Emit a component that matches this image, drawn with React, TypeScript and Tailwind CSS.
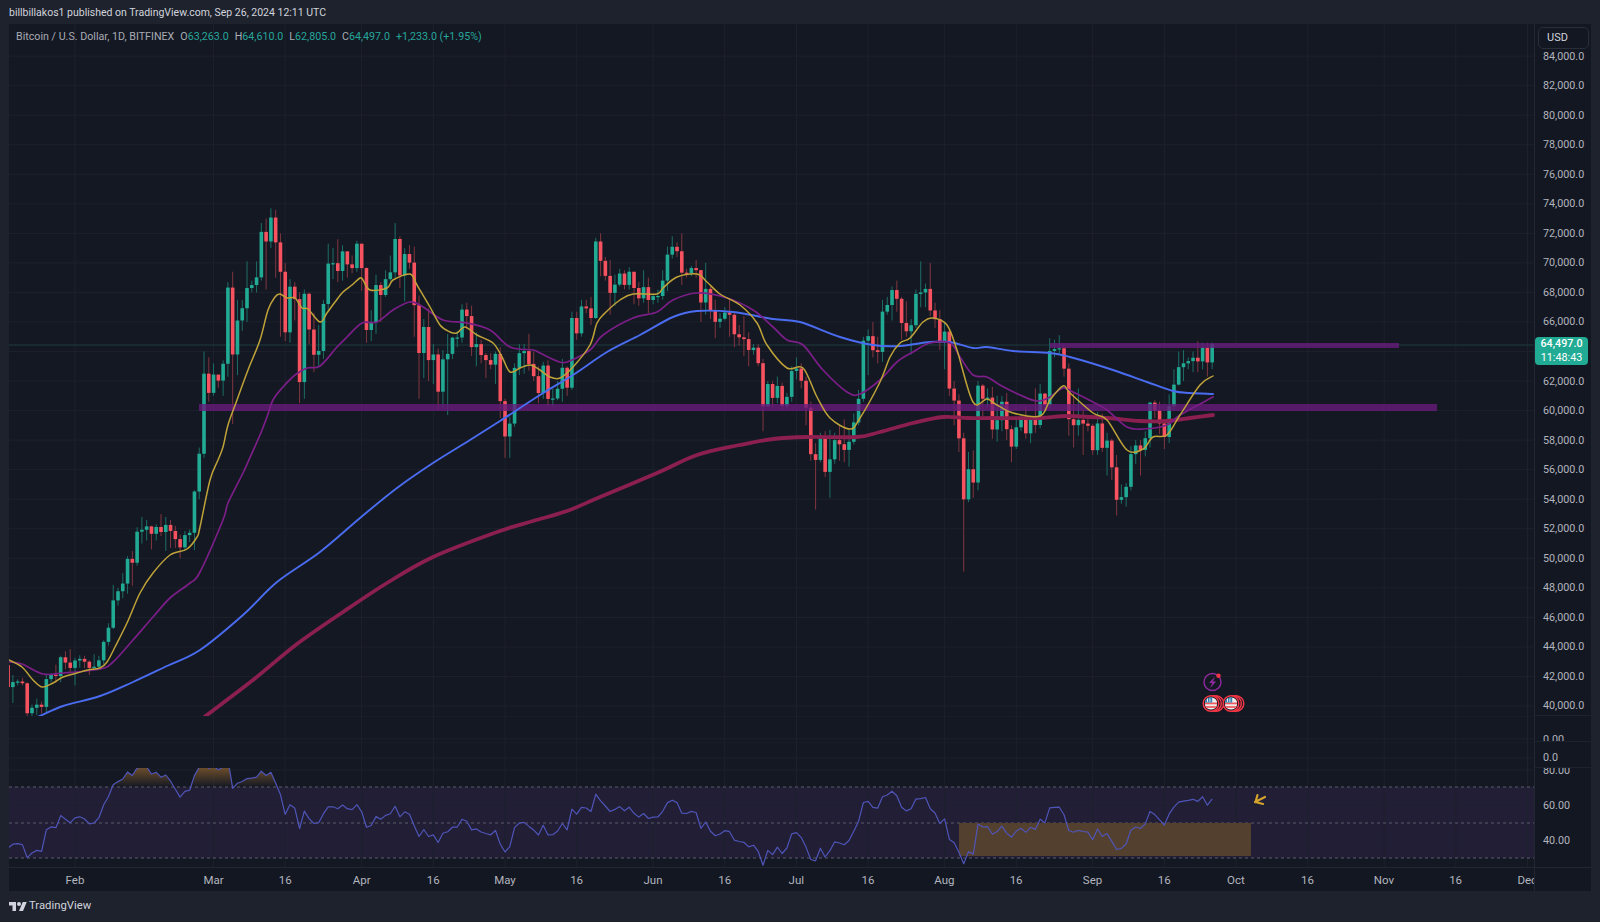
import React from "react";

// close, high, low in hundreds of USD, one row per day from Jan 18. Open is the previous close.
const bars: number[][] = [
  [412.8,430,408],[416.2,421,402],[416.6,418,414],[415.4,419,414],[395.1,416,392],[398.8,401,388],[400.9,405,394],[399.4,403,395],[418.2,422,395],[421.2,422,416],[420.3,428,416],[433,434,416],[429.4,437,425],[425.8,438.6,422],
  [430.8,432.6,414],[431.9,434.3,426],[430,434,425.6],[425.8,431,421],[426.6,435,424],[430.9,434,425],[443.4,444.5,428],[453,456,441],[471.5,482,452],[477.7,480,468],[482.9,490,473],[499.6,501.5,476],[497,505,481.5],[518,521,495],[519.3,528,510],[521.6,526,512],[516.6,522,506],[521.2,523,512],[517.8,530,515],[522.6,528,505],[518.5,526,507],[513,522,507],[507.4,516,500],[515.7,518.5,505],[517.3,519.5,511],[545.2,546,505.5],[570.8,575,540],[625,640,568],[612,636,606],
  [624.4,632,610],[620.3,624,615.5],[631.7,634,610],[683.3,687,623],[638,694,591],[661,675,624],[669.3,675,654],[683,701,660],[685,688,680],[690.2,701,680],[721,727,688],[714.5,730,682],[730.7,737,710],[713.9,736,690],[694,720,650],[653,700,647],[683.9,689,646],[675.5,687,661],[619.3,680,605],[679.1,682,608],[654.9,680,645],[637.8,666,626],[640.4,658,630],[672.2,675,635],[699.5,713,667],[699.8,710,689],[694.5,716,687],[707.8,712,688],[699,708,690],[696.5,705,693],[713,715,694],
  [696.5,713,681],[654.6,697,646],[659.7,668,647],[685,692,652],[678.3,687,660],[689,695,677],[693.6,705,688],[716.2,727,690],[691.5,718,683],[706,710,674],[700.2,712,696],[671.4,711,650],[639,678,608],[656.6,662,622],[634.2,669,620],[638,645,618],[612.8,642,600],[634.7,641,602],[638.4,652,597],[649.4,650,635],[649.5,654,643],[668.4,672,646],[664,673,655],[643,671,637],[645,653,630],[637.6,648,632],[634.2,639,622],[631.1,639,628],[638.4,640,618],[606.4,643,595],
  [582.5,608,568],[591.2,596,568],[628.9,632,589],[638.9,645,624],[640.3,645,625],[631.6,652,627],[623.3,640,620],[611.9,630,605],[630.5,633,608],[607.9,634,603],[608.2,615,603],[614.8,620,607],[629,635,606],[615.5,630,610],[662.7,667,614],[652.3,667,648],[670.5,675,650],[669.2,675,666],[662.7,677,658],[714.5,717,662],[701.4,720,691],[691.2,704,688],[679.7,702,665],[685.3,692,671],[692.8,696,684],[685.1,695,682],[694,697,682],[683,694,672],[676,687,671],[683.6,695,673],[674.9,690,666],
  [677.5,679,672],[677.6,682,673],[688,695,675],[705.6,711,681],[710.9,718,703],[707.9,714,704],[693.4,720,685],[693.1,696,690],[696.5,698,691],[695.1,702,690],[673.2,695,660],[682.4,700,665],[667.6,684,662],[660.1,675,649],[662.2,666,656],[666.4,670,661],[664.9,675,650],[651.7,666,643],[649.6,658,644],[648.4,664,637],[641,653,630],[642.6,645,638],[632.1,645,630],[602.8,635,586],[618,620,603],[608.6,620,602],[616.7,623,605],[603.2,619,600],[609.3,612,601],[626.8,630,606],
  [628.5,636,621],[620.2,632,615],[602,623,590],[570.5,606,566],[566.6,578,533],[582.3,585,565],[558.5,586,555],[567,587,541],[580,585,564],[577.2,590,566],[573.4,594,565],[578.9,587,562],[592,598,577],[608,614,590],[647.3,650,606],[650.4,655,624],[640.9,660,636],[639.7,650,632],[667,675,633],[671.5,677,665],[681.6,684,661],[675.7,688,667],[659.3,677,648],[653.7,674,650],[657.8,662,638],[679,682,656],[680,701,670],[682.4,686,670],[667.8,700,664],[661.9,673,656],[646.2,668,641],
  [653.5,660,628],[614.9,655,610],[606.8,620,590],[581.2,611,572],[539.9,585,491],[560.3,572,538],[551.3,573,541],[616.9,620,546],[608,618,596],[608.8,615,602],[587.2,616,581],[593.5,610,579],[606,610,586],[587.4,612,580],[575.6,590,565],[588.7,595,574],[594.8,597,586],[584.6,603,581],[594.9,596,578],[590.2,615,585],[611.5,618,588],[603.8,612,600],[640.4,649,601],[641.7,648,636],[642.2,651,638],[628.4,644,623],[594.2,632,583],[590.1,613,575],[593.7,615,583],[591.2,600,570],[589.7,595,586],
  [573.2,591,570],[591.3,599,570],[574.8,598,572],[579.7,585,556],[561.6,581,553],[539.6,570,529],[541.4,550,537],[548.4,551,535],[570.5,576,546],[576.4,580,564],[573.4,580,556],[581.3,586,569],[605.4,606,575],[600,607,595],[591.3,606,584],[582.1,592,574],[603,611,578],[617.6,628,600],[629.4,640,617],[632,641,620],[633.5,636,628],[635.8,640,626],[633.3,647,626],[642.6,646,628],[632.63,646,623],[644.97,646.1,628.05],
];

const yellow = "9,660 22,667 33,680 42,687 53,683 63,677 77,673 88,670 100,668 107,662 115,647 127,623 140,593 153,573 170,555 187,549 197,537 200,527 210,480 218,460 223,447 228,425 237,400 248,370 260,340 268,310 275,297 280,294 287,298 295,298 302,308 308,309 320,322 327,313 335,302 343,292 352,285 360,278 363,280 370,290 387,288 393,280 410,274 417,285 430,307 440,325 450,332 457,333 465,327 477,335 493,343 502,357 510,372 520,368 530,365 540,370 550,377 560,378 573,367 590,345 597,323 605,313 620,300 633,294 657,294 663,288 677,277 697,274 707,282 720,294 740,305 757,323 767,345 787,368 803,368 817,397 830,418 850,429 860,418 880,382 890,357 900,343 910,338 923,322 933,318 947,325 957,350 973,402 987,399 997,405 1013,413 1040,416 1050,400 1063,386 1070,393 1093,413 1107,420 1127,450 1143,449 1153,437 1167,435 1180,415 1200,385 1213,376";
const purple = "9,662 22,664 43,674 63,673 100,669 113,662 133,640 153,617 170,598 190,583 200,572 223,520 228,503 243,473 248,462 260,435 267,417 273,400 283,387 295,375 307,368 320,366 337,347 347,337 362,323 377,322 393,310 410,302 423,307 443,320 467,323 490,330 510,347 533,350 540,353 557,361 567,362 590,350 603,335 633,318 657,312 673,300 697,293 727,298 753,310 773,327 787,340 803,345 823,370 847,392 860,394 880,380 897,362 913,352 930,343 950,343 960,357 973,375 987,377 1000,385 1020,395 1037,401 1050,397 1063,388 1073,392 1093,402 1107,410 1127,427 1143,429 1167,425 1180,415 1213,397";
const blue = "30,720 40,716 63,706 100,696 133,682 167,666 200,650 243,615 277,582 320,552 360,518 397,488 433,463 470,440 500,421 540,395 573,375 607,352 640,335 673,317 697,311 733,312 773,319 800,322 840,337 873,345 900,346 930,342 950,342 973,348 987,347 1013,351 1050,353 1070,357 1113,370 1147,382 1173,391 1190,393 1213,394";
const maroon = "200,721 207,715 253,680 297,644 343,612 387,583 433,557 497,532 533,521 567,511 600,497 657,473 697,455 740,445 773,439 807,437 857,437 880,432 913,423 943,417 967,418 993,418 1040,418 1067,416 1107,418 1140,421 1167,421 1190,418 1213,415";

const ticks: [string, number][] = [["Feb",0],["Mar",29],["16",44],["Apr",60],["16",75],["May",90],["16",105],["Jun",121],["16",136],["Jul",151],["16",166],["Aug",182],["16",197],["Sep",213],["16",228],["Oct",243],["16",258],["Nov",274],["16",289],["Dec",304]];
const priceLabels = [84,82,80,78,76,74,72,70,68,66,64,62,60,58,56,54,52,50,48,46,44,42,40];

const xAt = (d: number) => 75 + 4.778 * d;
const yAt = (hundreds: number) => 706 - ((hundreds - 400) / 20) * 29.54;
const rsiY = (v: number) => 805 + ((60 - v) / 20) * 35.2;

const tickXs = ticks.map(([, d]) => xAt(d));

// catmull-rom through the read-off points, so the averages don't kink
const smooth = (points: string) => {
  const p = points.split(" ").map((s) => s.split(",").map(Number));
  let d = `M${p[0][0]} ${p[0][1]}`;
  for (let i = 0; i < p.length - 1; i++) {
    const a = p[Math.max(i - 1, 0)];
    const b = p[i];
    const c = p[i + 1];
    const e = p[Math.min(i + 2, p.length - 1)];
    const c1x = b[0] + (c[0] - a[0]) / 6;
    const c1y = b[1] + (c[1] - a[1]) / 6;
    const c2x = c[0] - (e[0] - b[0]) / 6;
    const c2y = c[1] - (e[1] - b[1]) / 6;
    d += `C${c1x.toFixed(1)} ${c1y.toFixed(1)} ${c2x.toFixed(1)} ${c2y.toFixed(1)} ${c[0]} ${c[1]}`;
  }
  return d;
};

const rsiLine = (() => {
  let gain = 2.9;
  let loss = 4.1;
  const out: string[] = [];
  bars.forEach((b, i) => {
    const prev = i === 0 ? 427.7 : bars[i - 1][0];
    const ch = b[0] - prev;
    gain = (gain * 13 + Math.max(ch, 0)) / 14;
    loss = (loss * 13 + Math.max(-ch, 0)) / 14;
    const v = 100 - 100 / (1 + gain / loss);
    out.push(`${xAt(i - 14).toFixed(1)},${rsiY(v).toFixed(1)}`);
  });
  return out;
})();

const Grid: React.FC<{ rows: number[]; top: number; bottom: number }> = ({ rows, top, bottom }) => (
  <g stroke="#1d212d" strokeWidth="1">
    {rows.map((y) => <line key={y} x1="9" x2="1534" y1={y} y2={y} />)}
    {tickXs.map((x) => <line key={x} x1={x} x2={x} y1={top} y2={bottom} />)}
  </g>
);

const Candles: React.FC = () => (
  <g>
    {bars.map((b, i) => {
      const [c, h, l] = b;
      const o = i === 0 ? 427.7 : bars[i - 1][0];
      const x = xAt(i - 14);
      const up = c >= o;
      const top = yAt(Math.max(o, c));
      const bottom = yAt(Math.min(o, c));
      return (
        <g key={i}>
          <line x1={x} x2={x} y1={yAt(h)} y2={yAt(l)} stroke={up ? "#1c6e66" : "#80363f"} strokeWidth="1" />
          <rect x={x - 1.8} y={top} width="3.6" height={Math.max(bottom - top, 1.2)} fill={up ? "#22ab94" : "#f7525f"} />
        </g>
      );
    })}
  </g>
);

const UsFlag: React.FC<{ cx: number; cy: number; id: string }> = ({ cx, cy, id }) => (
  <g>
    <circle cx={cx + 5} cy={cy} r="7.8" fill="#141823" stroke="#f23645" strokeWidth="1.5" />
    <circle cx={cx + 2.5} cy={cy} r="7.8" fill="#141823" stroke="#f23645" strokeWidth="1.5" />
    <circle cx={cx} cy={cy} r="7.8" fill="#141823" stroke="#f23645" strokeWidth="1.5" />
    <clipPath id={id}><circle cx={cx} cy={cy} r="6.2" /></clipPath>
    <g clipPath={`url(#${id})`}>
      <rect x={cx - 6.2} y={cy - 6.2} width="12.4" height="12.4" fill="#eeeeee" />
      <rect x={cx - 6.2} y={cy - 1} width="12.4" height="1.8" fill="#f05a5f" />
      <rect x={cx - 6.2} y={cy + 2.6} width="12.4" height="1.8" fill="#f05a5f" />
      <rect x={cx - 6.2} y={cy - 6.2} width="7.4" height="5.2" fill="#2f7fae" />
      <rect x={cx - 4} y={cy - 5} width="1" height="3.4" fill="#e6eef2" />
      <rect x={cx - 1.6} y={cy - 5} width="1" height="3.4" fill="#e6eef2" />
    </g>
  </g>
);

const MainPane: React.FC = () => (
  <svg className="block h-[692px] w-[1525px]" viewBox="9 24 1525 692">
    <Grid rows={priceLabels.map((p) => yAt(p * 10))} top={24} bottom={716} />
    <line x1="9" x2="1534" y1="345" y2="345" stroke="#1c3a3c" strokeWidth="1" />
    <Candles />
    <rect x="1050" y="343" width="349" height="5" fill="#661c7b" fillOpacity="0.8" />
    <rect x="199" y="404" width="1238" height="7" fill="#661c7b" fillOpacity="0.8" />
    <g fill="none" strokeLinejoin="round" strokeLinecap="round">
      <path d={smooth(maroon)} stroke="#8a1f50" strokeWidth="3.8" />
      <path d={smooth(blue)} stroke="#4a6cf0" strokeWidth="1.9" />
      <path d={smooth(purple)} stroke="#7b1e87" strokeWidth="1.7" />
      <path d={smooth(yellow)} stroke="#bfa339" strokeWidth="1.5" />
    </g>
    <circle cx="1212.5" cy="682" r="8.5" fill="none" stroke="#8e2a9e" strokeWidth="1.4" />
    <path d="M1215 676.5l-6 6.5h3.2l-2 5 6-6.5h-3.2z" fill="#8e2a9e" />
    <circle cx="1218.5" cy="675.8" r="2.2" fill="#f23645" />
    <UsFlag cx={1211} cy={703.5} id="flag-a" />
    <UsFlag cx={1231} cy={703.5} id="flag-b" />
  </svg>
);

const RsiPane: React.FC = () => {
  const pts = rsiLine.join(" ");
  const first = rsiLine[0].split(",")[0];
  const last = rsiLine[rsiLine.length - 1].split(",")[0];
  return (
    <svg className="block h-[99px] w-[1525px]" viewBox="9 768 1525 99">
      <defs>
        <linearGradient id="over" gradientUnits="userSpaceOnUse" x1="0" x2="0" y1="768" y2="787">
          <stop offset="0" stopColor="#6b4d2a" />
          <stop offset="1" stopColor="#6b4d2a" stopOpacity="0" />
        </linearGradient>
        <clipPath id="above"><rect x="9" y="768" width="1525" height="19" /></clipPath>
      </defs>
      <rect x="9" y="787" width="1525" height="71" fill="#211e35" />
      <Grid rows={[770, 805, 840]} top={768} bottom={867} />
      <g stroke="#5b5d6a" strokeWidth="1" strokeDasharray="3 3">
        <line x1="9" x2="1534" y1="787" y2="787" />
        <line x1="9" x2="1534" y1="823" y2="823" />
        <line x1="9" x2="1534" y1="858" y2="858" />
      </g>
      <polygon points={`${first},787 ${pts} ${last},787`} fill="url(#over)" clipPath="url(#above)" />
      <rect x="959" y="823" width="292" height="33" fill="#54402f" />
      <polyline points={pts} fill="none" stroke="#4f55b8" strokeWidth="1.2" strokeLinejoin="round" />
      <path d="M1265 797l-10 5M1257.5 795l-2 7 7.5 2" fill="none" stroke="#d4a32d" strokeWidth="2.2" strokeLinecap="round" strokeLinejoin="round" />
    </svg>
  );
};

const EmptyPane: React.FC<{ top: number; rows: number[] }> = ({ top, rows }) => (
  <svg className="block h-[26px] w-[1525px]" viewBox={`9 ${top} 1525 26`}>
    <Grid rows={rows} top={top} bottom={top + 26} />
  </svg>
);

const TimeAxis: React.FC = () => (
  <div className="flex h-6 w-[1525px] overflow-hidden border-t border-[#232733] text-[11.5px] leading-6 text-[#b2b5be]">
    {tickXs.map((x, i) => {
      const left = i === 0 ? 9 : (tickXs[i - 1] + x) / 2;
      const right = i === tickXs.length - 1 ? x + 40 : (x + tickXs[i + 1]) / 2;
      const cx = x - left;
      const half = Math.min(cx, right - x);
      return (
        <div key={i} className="relative shrink-0" style={{ width: right - left }}>
          <span className="block text-center" style={{ marginLeft: cx - half, width: half * 2 }}>{ticks[i][0]}</span>
        </div>
      );
    })}
  </div>
);

const PriceAxis: React.FC = () => (
  <div className="relative flex w-[57px] flex-col border-l border-[#232733] text-[10.75px] text-[#b2b5be]">
    <div className="h-[692px] overflow-hidden border-b border-[#1e222d] pl-2 pt-[18px]">
      {priceLabels.map((p) => (
        <div key={p} className="flex h-[29.54px] items-center">{p === 64 ? "" : `${p},000.0`}</div>
      ))}
    </div>
    <div className="h-[26px] overflow-hidden border-b border-[#1e222d] pl-2 pt-[18px] leading-3">0.00</div>
    <div className="h-[26px] overflow-hidden border-b border-[#1e222d] pl-2 pt-[10px] leading-3">0.0</div>
    <div className="h-[99px] overflow-hidden pl-2">
      <div className="-mt-[15px]">
        {["80.00", "60.00", "40.00"].map((t) => (
          <div key={t} className="flex h-[35.2px] items-center">{t}</div>
        ))}
      </div>
    </div>
    <div className="h-6 border-t border-[#232733]" />
    <div className="absolute left-[3px] top-[3px] flex h-[22px] w-[51px] items-center rounded-[5px] border border-[#2a2e39] bg-[#131722] pl-[8px] text-[11px] text-[#d1d4dc]">USD</div>
    <div className="absolute left-0 top-[313px] flex h-[28px] w-[53px] flex-col items-center justify-center rounded-sm bg-[#22ab94] text-[10.75px] leading-[14px] text-white">
      <span className="font-medium">64,497.0</span>
      <span>11:48:43</span>
    </div>
  </div>
);

const Legend: React.FC = () => {
  const teal = "text-[#26a69a]";
  return (
    <div className="absolute left-[7px] top-[6px] flex text-[10.7px] leading-[14px] text-[#a8abb3]">
      <span className="mr-[6px]">Bitcoin / U.S. Dollar, 1D, BITFINEX</span>
      <span className="mr-[6px]">O<span className={teal}>63,263.0</span></span>
      <span className="mr-[6px]">H<span className={teal}>64,610.0</span></span>
      <span className="mr-[6px]">L<span className={teal}>62,805.0</span></span>
      <span className="mr-[6px]">C<span className={teal}>64,497.0</span></span>
      <span className={teal}>+1,233.0 (+1.95%)</span>
    </div>
  );
};

export default function App() {
  return (
    <div className="flex h-[922px] w-[1600px] flex-col overflow-hidden bg-[#1e222d] font-['Roboto',sans-serif]">
      <div className="flex h-6 items-center pl-[9px] pt-[2px] text-[10.5px] text-[#d1d4dc]">
        billbillakos1 published on TradingView.com, Sep 26, 2024 12:11 UTC
      </div>
      <div className="ml-[9px] flex h-[867px] w-[1582px] bg-[#131722]">
        <div className="relative w-[1525px]">
          <Legend />
          <div className="bg-[#141823]">
            <MainPane />
            <EmptyPane top={716} rows={[716, 739]} />
            <EmptyPane top={742} rows={[742, 758]} />
            <RsiPane />
          </div>
          <TimeAxis />
        </div>
        <PriceAxis />
      </div>
      <div className="flex flex-1 items-center pl-[9px] text-[#d1d4dc]">
        <svg className="h-[14px] w-[18px]" viewBox="0 0 36 28" fill="currentColor">
          <path d="M14 22H7V11H0V4h14v18zM28 22h-8l7.5-18h8L28 22z" />
          <circle cx="20" cy="8" r="4" />
        </svg>
        <span className="ml-[2px] text-[11.3px]">TradingView</span>
      </div>
    </div>
  );
}
